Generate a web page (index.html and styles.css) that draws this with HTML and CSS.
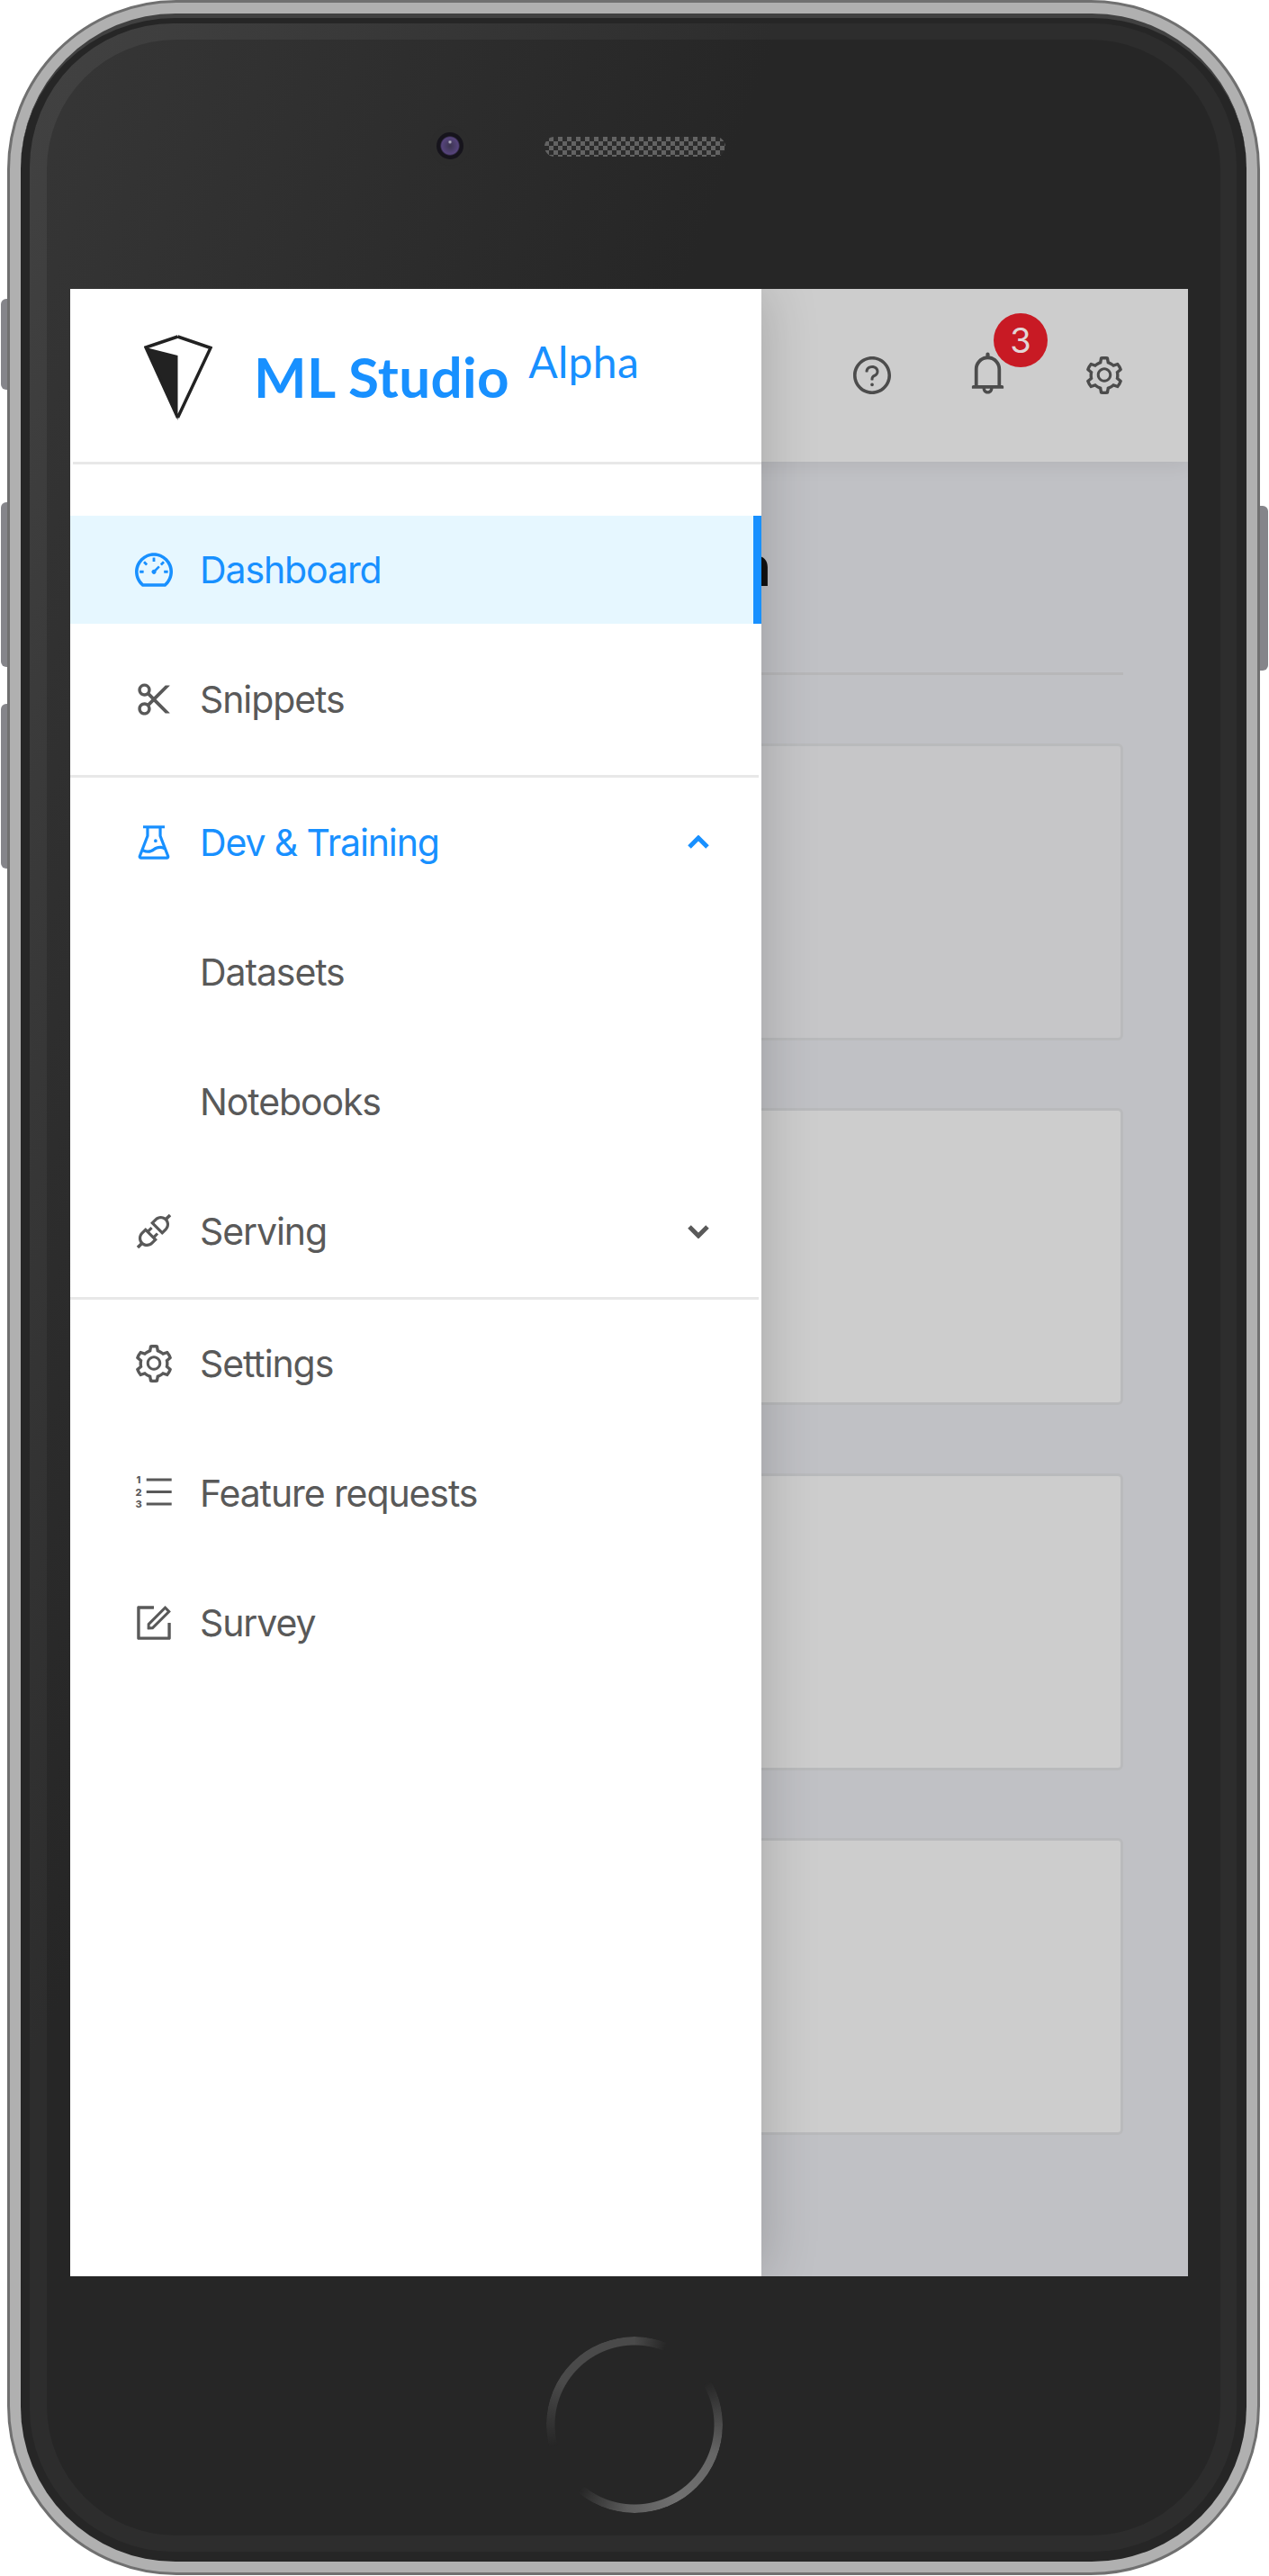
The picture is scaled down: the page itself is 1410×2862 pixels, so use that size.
FILE: index.html
```html
<!DOCTYPE html>
<html lang="en">
<head>
    <meta charset="UTF-8">
    <meta name="viewport" content="width=device-width, initial-scale=1.0">
    <title>ML Studio</title>
    <link rel="stylesheet" href="styles.css">
</head>
<body>
    <div class="device">
        <div class="rail rail-left">
            <span class="side-btn side-btn-short"></span>
            <span class="side-btn side-btn-long"></span>
            <span class="side-btn side-btn-long"></span>
        </div>

        <div class="case">
            <div class="bezel">
                <div class="band">
                    <div class="face">
                        <div class="ear">
                            <div class="camera"><span class="lens"></span></div>
                            <div class="speaker"></div>
                        </div>

                        <div class="screen">
                            <div class="app">
                                <header class="topbar">
                                    <div class="top-slot">
                                        <svg class="icon" viewBox="64 64 896 896"><path d="M512 64C264.6 64 64 264.6 64 512s200.6 448 448 448 448-200.6 448-448S759.4 64 512 64zm0 820c-205.4 0-372-166.6-372-372s166.6-372 372-372 372 166.6 372 372-166.6 372-372 372z"/><path d="M623.6 316.7C593.6 290.4 554 276 512 276s-81.6 14.5-111.6 40.7C369.2 344 352 380.7 352 420v7.6c0 4.4 3.6 8 8 8h48c4.4 0 8-3.6 8-8V420c0-44.1 43.1-80 96-80s96 35.9 96 80c0 31.1-22 59.6-56.1 72.7-21.2 8.1-39.2 22.3-52.1 40.9-13.1 19-19.9 41.8-19.9 64.9V620c0 4.4 3.6 8 8 8h48c4.4 0 8-3.6 8-8v-22.7a48.3 48.3 0 0 1 30.9-44.8c59-22.7 97.1-74.7 97.1-132.5.1-39.3-17.1-76-48.3-103.3zM472 732a40 40 0 1 0 80 0 40 40 0 1 0-80 0z"/></svg>
                                    </div>
                                    <div class="top-slot">
                                        <svg class="icon icon-bell" viewBox="64 64 896 896"><path d="M816 768h-24V428c0-141.1-104.3-257.7-240-277.1V112c0-22.1-17.9-40-40-40s-40 17.9-40 40v38.9c-135.7 19.4-240 136-240 277.1v340h-24c-17.7 0-32 14.3-32 32v32c0 4.4 3.6 8 8 8h216c0 61.8 50.2 112 112 112s112-50.2 112-112h216c4.4 0 8-3.6 8-8v-32c0-17.7-14.3-32-32-32zM512 888c-26.5 0-48-21.5-48-48h96c0 26.5-21.5 48-48 48zM304 768V428c0-55.6 21.6-107.8 60.9-147.1S456.4 220 512 220c55.6 0 107.8 21.6 147.1 60.9S720 372.4 720 428v340H304z"/></svg>
                                        <span class="badge">3</span>
                                    </div>
                                    <div class="top-slot">
                                        <svg class="icon" viewBox="64 64 896 896"><use href="#gear"/></svg>
                                    </div>
                                </header>

                                <main class="main">
                                    <h1 class="page-title">n</h1>
                                    <div class="cards">
                                        <div class="card card-first"></div>
                                        <div class="card"></div>
                                        <div class="card"></div>
                                        <div class="card"></div>
                                    </div>
                                </main>
                            </div>

                            <aside class="drawer">
                                <div class="brand">
                                    <svg class="logo" viewBox="0 0 76 96">
                                        <path class="logo-fill" d="M2 14 L37.5 23 L37.5 95 Z"/>
                                        <path class="logo-line" d="M37.5 2 L74 14.500 L37.500 92 M37.500 92 L2 14 L37.500 2"/>
                                    </svg>
                                    <div class="brand-name">ML Studio <span class="brand-tag">Alpha</span></div>
                                </div>
                                <div class="divider divider-brand"></div>

                                <nav class="menu-section menu-first">
                                    <a class="menu-item active">
                                        <svg class="icon" viewBox="64 64 896 896"><path d="M924.8 385.6a446.7 446.7 0 0 0-96-142.4 446.7 446.7 0 0 0-142.4-96C631.1 123.8 572.5 112 512 112s-119.1 11.800-174.4 35.200a446.7 446.7 0 0 0-142.4 96 446.7 446.7 0 0 0-96 142.4C75.800 440.9 64 499.5 64 560c0 132.7 58.300 257.7 159.9 343.1l1.700 1.400c5.800 4.800 13.100 7.500 20.600 7.500h531.7c7.500 0 14.800-2.700 20.600-7.500l1.700-1.400C901.7 817.7 960 692.7 960 560c0-60.500-11.900-119.1-35.200-174.4zM761.4 836H262.6A371.12 371.12 0 0 1 140 560c0-99.400 38.700-192.8 109-263 70.300-70.300 163.7-109 263-109 99.400 0 192.8 38.700 263 109 70.300 70.300 109 163.7 109 263 0 105.6-44.500 205.5-122.6 276zM623.5 421.5a8.030 8.030 0 0 0-11.300 0L527.7 506c-18.700-5-39.400-.2-54.100 14.500a55.950 55.950 0 0 0 0 79.200 55.950 55.950 0 0 0 79.200 0 55.870 55.870 0 0 0 14.500-54.100l84.500-84.500c3.100-3.100 3.100-8.200 0-11.300l-28.300-28.300zM490 320h44c4.400 0 8-3.600 8-8v-80c0-4.400-3.600-8-8-8h-44c-4.400 0-8 3.600-8 8v80c0 4.400 3.600 8 8 8zm260 218v44c0 4.400 3.600 8 8 8h80c4.400 0 8-3.600 8-8v-44c0-4.400-3.600-8-8-8h-80c-4.400 0-8 3.600-8 8zm12.700-197.200l-31.100-31.100a8.030 8.030 0 0 0-11.300 0l-56.600 56.600a8.030 8.030 0 0 0 0 11.300l31.100 31.100c3.100 3.100 8.200 3.100 11.300 0l56.600-56.600c3.100-3.100 3.100-8.200 0-11.300zm-458.600-31.100a8.030 8.030 0 0 0-11.300 0l-31.100 31.100a8.030 8.030 0 0 0 0 11.300l56.600 56.600c3.100 3.100 8.200 3.100 11.300 0l31.100-31.100c3.100-3.100 3.100-8.200 0-11.300l-56.600-56.600zM262 530h-80c-4.400 0-8 3.600-8 8v44c0 4.400 3.600 8 8 8h80c4.400 0 8-3.600 8-8v-44c0-4.400-3.600-8-8-8z"/></svg>
                                        <span>Dashboard</span>
                                    </a>
                                    <a class="menu-item">
                                        <svg class="icon" viewBox="64 64 896 896"><path d="M567.1 512l318.5-319.3c5-5 1.500-13.700-5.600-13.700h-90.500c-2.100 0-4.200.8-5.600 2.300l-273.3 274-90.200-90.500c12.500-22.100 19.700-47.600 19.700-74.800 0-83.900-68.100-152-152-152s-152 68.100-152 152 68.100 152 152 152c27.700 0 53.600-7.400 75.900-20.300l90 90.300-90.100 90.300A151.040 151.040 0 0 0 288 582c-83.900 0-152 68.100-152 152s68.100 152 152 152 152-68.100 152-152c0-27.200-7.200-52.700-19.700-74.800l90.200-90.500 273.3 274c1.500 1.500 3.500 2.300 5.600 2.300H880c7.100 0 10.700-8.600 5.600-13.700L567.1 512zM288 370c-44.100 0-80-35.900-80-80s35.900-80 80-80 80 35.900 80 80-35.900 80-80 80zm0 444c-44.100 0-80-35.900-80-80s35.900-80 80-80 80 35.900 80 80-35.900 80-80 80z"/></svg>
                                        <span>Snippets</span>
                                    </a>
                                </nav>
                                <div class="divider"></div>

                                <nav class="menu-section menu-second">
                                    <a class="menu-item open">
                                        <svg class="icon" viewBox="64 64 896 896"><path d="M512 472a40 40 0 1 0 80 0 40 40 0 1 0-80 0zm367 352.900L696.300 352V178H768v-68H256v68h71.700v174L145 824.900c-2.800 7.400-4.300 15.200-4.300 23.100 0 35.300 28.700 64 64 64h614.600c7.900 0 15.700-1.500 23.100-4.300 33-12.700 49.400-49.800 36.600-82.800zM395.700 364.700V180h232.600v184.700L719.200 600c-20.700-5.300-42.100-8-63.900-8-61.200 0-119.200 21.500-165.300 60a188.780 188.780 0 0 1-121.300 43.900c-32.700 0-64.100-8.300-91.800-23.700l118.800-307.500zM210.500 844l41.700-107.800c35.700 18.100 75.400 27.800 116.600 27.800 61.200 0 119.200-21.500 165.300-60 33.900-28.200 76.300-43.900 121.300-43.900 35 0 68.400 9.500 97.600 27.100L813.500 844h-603z"/></svg>
                                        <span>Dev &amp; Training</span>
                                        <svg class="chevron" viewBox="0 0 26 16"><path d="M3 13 L13 3 L23 13"/></svg>
                                    </a>
                                    <a class="menu-item sub-item"><span>Datasets</span></a>
                                    <a class="menu-item sub-item"><span>Notebooks</span></a>
                                    <a class="menu-item">
                                        <svg class="icon" viewBox="64 64 896 896"><path d="M917.7 148.800l-42.400-42.400c-1.600-1.600-3.600-2.300-5.700-2.300s-4.100.8-5.700 2.300l-76.100 76.100a199.270 199.270 0 0 0-112.100-34.300c-51.200 0-102.400 19.500-141.500 58.600L432.300 308.700a8.030 8.030 0 0 0 0 11.300L704 591.700c1.600 1.600 3.600 2.300 5.700 2.300 2 0 4.100-.8 5.700-2.300l101.900-101.900c68.900-69 77-175.700 24.300-253.500l76.100-76.100c3.100-3.200 3.100-8.300 0-11.400zM769.100 441.700l-59.400 59.400-186.800-186.800 59.400-59.400c24.900-24.900 58.100-38.700 93.400-38.700 35.300 0 68.400 13.700 93.400 38.700 24.900 24.900 38.700 58.100 38.700 93.400 0 35.300-13.800 68.400-38.700 93.400zm-190.200 105a8.030 8.030 0 0 0-11.300 0L501 613.300 410.700 523l66.700-66.700c3.100-3.100 3.100-8.200 0-11.300L441 408.600a8.030 8.030 0 0 0-11.300 0L363 475.300l-43-43a7.850 7.850 0 0 0-5.700-2.300c-2 0-4.100.8-5.700 2.300L206.800 534.200c-68.900 69-77 175.700-24.300 253.500l-76.100 76.100a8.030 8.030 0 0 0 0 11.300l42.400 42.400c1.600 1.600 3.600 2.300 5.700 2.300s4.100-.8 5.700-2.300l76.100-76.100c33.700 22.900 72.900 34.300 112.100 34.300 51.200 0 102.400-19.500 141.500-58.600l101.900-101.900c3.100-3.100 3.100-8.200 0-11.300l-43-43 66.700-66.700c3.100-3.100 3.100-8.200 0-11.300l-36.600-36.200zM441.700 769.100a131.320 131.320 0 0 1-93.400 38.700c-35.300 0-68.400-13.700-93.400-38.700a131.320 131.320 0 0 1-38.700-93.400c0-35.300 13.700-68.400 38.700-93.400l59.400-59.400 186.800 186.800-59.400 59.400z"/></svg>
                                        <span>Serving</span>
                                        <svg class="chevron" viewBox="0 0 26 16"><path d="M3 3 L13 13 L23 3"/></svg>
                                    </a>
                                </nav>
                                <div class="divider"></div>

                                <nav class="menu-section menu-third">
                                    <a class="menu-item">
                                        <svg class="icon" viewBox="64 64 896 896">
                                            <path id="gear" d="M924.8 625.7l-65.500-56c3.100-19 4.700-38.400 4.700-57.800s-1.600-38.800-4.700-57.800l65.500-56a32.030 32.030 0 0 0 9.300-35.200l-.9-2.600a443.740 443.740 0 0 0-79.700-137.900l-1.800-2.100a32.120 32.120 0 0 0-35.100-9.500l-81.300 28.900c-30-24.600-63.500-44-99.700-57.600l-15.700-85a32.050 32.050 0 0 0-25.800-25.700l-2.700-.5c-52.100-9.400-106.900-9.400-159 0l-2.700.5a32.050 32.050 0 0 0-25.800 25.700l-15.800 85.400a351.860 351.860 0 0 0-99 57.400l-81.900-29.100a32 32 0 0 0-35.100 9.500l-1.800 2.100a446.020 446.020 0 0 0-79.700 137.900l-.9 2.600c-4.500 12.500-.8 26.500 9.300 35.200l66.300 56.600c-3.100 18.800-4.600 38-4.600 57.100 0 19.200 1.500 38.400 4.600 57.100L99 625.500a32.030 32.030 0 0 0-9.300 35.200l.9 2.600c18.100 50.400 44.900 96.900 79.700 137.900l1.800 2.100a32.120 32.120 0 0 0 35.100 9.500l81.900-29.100c29.800 24.500 63.100 43.900 99 57.400l15.800 85.400a32.050 32.050 0 0 0 25.800 25.700l2.700.5a449.400 449.400 0 0 0 159 0l2.700-.5a32.050 32.050 0 0 0 25.800-25.700l15.700-85a350 350 0 0 0 99.700-57.600l81.300 28.900a32 32 0 0 0 35.100-9.500l1.800-2.100c34.800-41.100 61.600-87.500 79.700-137.900l.9-2.600c4.500-12.300.8-26.300-9.300-35zM788.300 465.900c2.500 15.100 3.800 30.600 3.800 46.100s-1.300 31-3.800 46.100l-6.600 40.100 74.700 63.900a370.030 370.030 0 0 1-42.600 73.600L721 702.800l-31.400 25.800c-23.900 19.600-50.500 35-79.300 45.800l-38.100 14.300-17.900 97a377.500 377.500 0 0 1-85 0l-17.900-97.200-37.800-14.500c-28.500-10.800-55-26.200-78.700-45.700l-31.400-25.900-93.400 33.200c-17-22.900-31.200-47.600-42.600-73.600l75.500-64.500-6.500-40c-2.400-14.900-3.700-30.300-3.700-45.500 0-15.300 1.200-30.600 3.700-45.500l6.500-40-75.500-64.500c11.300-26.100 25.600-50.700 42.600-73.600l93.400 33.200 31.400-25.900c23.700-19.500 50.200-34.900 78.700-45.700l37.900-14.300 17.900-97.200c28.100-3.200 56.800-3.200 85 0l17.900 97 38.100 14.300c28.700 10.800 55.400 26.200 79.300 45.800l31.400 25.800 92.800-32.900c17 22.900 31.200 47.600 42.600 73.600L781.800 426l6.500 39.900zM512 326c-97.200 0-176 78.800-176 176s78.800 176 176 176 176-78.800 176-176-78.800-176-176-176zm79.200 255.200A111.600 111.600 0 0 1 512 614c-29.900 0-58-11.700-79.200-32.800A111.600 111.600 0 0 1 400 502c0-29.900 11.700-58 32.800-79.200C454 401.600 482.100 390 512 390c29.900 0 58 11.600 79.200 32.800A111.600 111.600 0 0 1 624 502c0 29.900-11.700 58-32.800 79.200z"/>
                                        </svg>
                                        <span>Settings</span>
                                    </a>
                                    <a class="menu-item">
                                        <svg class="icon" viewBox="0 0 42 42">
                                            <text class="list-num" x="4" y="10">1</text>
                                            <text class="list-num" x="4" y="23.500">2</text>
                                            <text class="list-num" x="4" y="37">3</text>
                                            <rect x="12.700" y="4.500" width="28" height="3"/>
                                            <rect x="12.700" y="18" width="28" height="3"/>
                                            <rect x="12.700" y="31.500" width="28" height="3"/>
                                        </svg>
                                        <span>Feature requests</span>
                                    </a>
                                    <a class="menu-item">
                                        <svg class="icon" viewBox="64 64 896 896"><path d="M904 512h-56c-4.400 0-8 3.600-8 8v320H184V184h320c4.400 0 8-3.600 8-8v-56c0-4.400-3.600-8-8-8H144c-17.700 0-32 14.300-32 32v736c0 17.700 14.300 32 32 32h736c17.700 0 32-14.300 32-32V520c0-4.400-3.600-8-8-8z"/><path d="M355.900 534.900L354 653.800c-.1 8.900 7.100 16.200 16 16.200h.4l118-2.900c2-.1 4-.9 5.400-2.300l415.900-415c3.100-3.100 3.100-8.200 0-11.300L785.400 114.300c-1.600-1.600-3.600-2.300-5.700-2.300s-4.100.7-5.700 2.300l-415.800 415a8.300 8.300 0 0 0-2.300 5.600zm63.500 23.600L779.700 199l45.200 45.100-360.500 359.700-45.700 1.100.7-46.400z"/></svg>
                                        <span>Survey</span>
                                    </a>
                                </nav>
                            </aside>
                        </div>

                        <div class="chin">
                            <div class="home-ring"></div>
                        </div>
                    </div>
                </div>
            </div>
        </div>

        <div class="rail rail-right">
            <span class="side-btn side-btn-long"></span>
        </div>
    </div>
</body>
</html>
```

FILE: styles.css
```css
* {
    box-sizing: border-box;
}
body {
    margin: 0;
    background: white;
    font-family: "Inter", "Liberation Sans", sans-serif;
    color: #595959;
}

/* phone body */
.device {
    display: flex;
    width: 1410px;
    height: 2862px;
}
.rail {
    display: flex;
    flex-direction: column;
}
.rail-left {
    width: 8px;
    padding: 332px 0 0 1px;
    gap: 41px;
}
.rail-right {
    width: 10px;
    padding: 562px 1px 0 0;
}
.side-btn {
    display: block;
    background: #85858a;
}
.rail-left .side-btn {
    border-radius: 6px 0 0 6px;
}
.rail-right .side-btn {
    border-radius: 0 6px 6px 0;
}
.side-btn-short {
    height: 101px;
    margin-bottom: 84px;
}
.side-btn-long {
    height: 183px;
}
.case {
    width: 1392px;
    height: 2861px;
    padding: 12px;
    background: #b0b0b0;
    border: 3px solid #707070;
    border-radius: 188px;
}
.bezel {
    height: 100%;
    padding: 6px 11px 11px 10px;
    background: #262626;
    border-top: 5px solid #414141;
    border-radius: 172px;
}
.band {
    height: 100%;
    padding: 18px 18px 18px 19px;
    background: linear-gradient(110deg, #424242 0%, #2d2d2d 35%);
    border-radius: 160px;
}
.face {
    display: flex;
    flex-direction: column;
    height: 100%;
    padding: 0 36px 0 26px;
    background: linear-gradient(110deg, #363636 0%, #262626 35%);
    border-radius: 144px;
}

/* camera and speaker */
.ear {
    display: flex;
    align-items: flex-start;
    height: 277px;
    padding: 96px 0 0 400px;
    flex-shrink: 0;
}
.camera {
    display: flex;
    align-items: center;
    justify-content: center;
    width: 44px;
    height: 44px;
    background: #2c2c2c;
    border-radius: 50%;
}
.lens {
    width: 30px;
    height: 30px;
    background:
        radial-gradient(circle closest-side at 50% 36%, #d8d8e0 0, rgba(216, 216, 224, 0) 22%),
        radial-gradient(circle closest-side, #3c3550 0, #56447c 62%, #16141c 74%);
    border-radius: 50%;
}
.speaker {
    width: 201px;
    height: 22px;
    margin: 12px 0 0 83px;
    background: repeating-conic-gradient(#636363 0 25%, #2b2b2b 0 50%) 0 0 / 10px 10px;
    border-radius: 11px;
}

/* screen */
.screen {
    position: relative;
    width: 1242px;
    height: 2208px;
    flex-shrink: 0;
    overflow: hidden;
}
.app {
    display: flex;
    flex-direction: column;
    height: 100%;
    background: #c0c1c5;
}
.topbar {
    position: relative;
    display: flex;
    justify-content: flex-end;
    height: 192px;
    padding-right: 29px;
    background: #cdcdcd;
    box-shadow: 0 4px 20px rgba(0, 0, 0, 0.07);
}
.top-slot {
    position: relative;
    display: flex;
    align-items: center;
    justify-content: center;
    width: 129px;
    color: #4c4c4c;
}
.icon {
    display: block;
    width: 42px;
    height: 42px;
    flex-shrink: 0;
    fill: currentColor;
}
.icon-bell {
    width: 47px;
    height: 47px;
    margin-bottom: 6px;
}
.badge {
    position: absolute;
    top: 27px;
    left: 71px;
    width: 60px;
    height: 60px;
    background: #c81a24;
    color: #e2d6d6;
    font-size: 38px;
    line-height: 60px;
    text-align: center;
    border-radius: 50%;
}
.main {
    padding-right: 72px;
}
.page-title {
    height: 237px;
    margin: 0;
    padding: 72px 391px 0 0;
    font-size: 60px;
    font-weight: 600;
    line-height: 88px;
    color: #111;
    text-align: right;
    border-bottom: 3px solid #b7b7b9;
}
.cards {
    display: flex;
    flex-direction: column;
    gap: 75.400px;
    padding-top: 76px;
}
.card {
    height: 330px;
    background: #cdcdcd;
    border: 3px solid #b9babc;
    border-radius: 6px;
}
.card-first {
    background: #c6c6c8;
}

/* drawer */
.drawer {
    position: absolute;
    top: 0;
    left: 0;
    bottom: 0;
    width: 768px;
    background: white;
    box-shadow: 0 0 60px rgba(0, 0, 0, 0.2);
}
.brand {
    display: flex;
    align-items: center;
    height: 192px;
    padding-left: 82px;
}
.logo {
    width: 76px;
    height: 96px;
    margin-top: 5px;
}
.logo-fill {
    fill: #222;
}
.logo-line {
    fill: none;
    stroke: #222;
    stroke-width: 3.500;
}
.brand-name {
    margin: 0 0 6px 46px;
    font-family: "Lato", sans-serif;
    font-size: 62px;
    font-weight: 700;
    letter-spacing: 0.3px;
    color: #1890ff;
    white-space: nowrap;
}
.brand-tag {
    margin-left: 6px;
    font-size: 48px;
    font-weight: 400;
    vertical-align: 22px;
}
.divider {
    height: 3px;
    margin-right: 3px;
    background: #e8e8e8;
}
.divider-brand {
    margin: 0 0 0 3px;
}
.menu-section {
    display: flex;
    flex-direction: column;
    gap: 24px;
}
.menu-first {
    padding: 57px 0 24px;
}
.menu-second {
    padding: 12px 0 13px;
}
.menu-third {
    padding-top: 11px;
}
.menu-item {
    display: flex;
    align-items: center;
    gap: 30px;
    height: 120px;
    padding-left: 72px;
    font-size: 41px;
    letter-spacing: -1.100px;
    color: #595959;
}
.menu-item.active {
    background: #e6f7ff;
    border-right: 9px solid #1890ff;
    color: #1890ff;
}
.menu-item.open {
    color: #1890ff;
}
.sub-item {
    padding-left: 144px;
}
.chevron {
    width: 26px;
    height: 16px;
    margin: 0 57px 0 auto;
    fill: none;
    stroke: currentColor;
    stroke-width: 5;
}
.list-num {
    font-size: 11px;
    font-weight: 800;
    letter-spacing: 0;
    text-anchor: middle;
}

/* home button */
.chin {
    display: flex;
    justify-content: center;
    padding: 67px 0 0 11px;
}
.home-ring {
    width: 196px;
    height: 196px;
    border-radius: 50%;
    background: conic-gradient(#4a4a4a 0deg, transparent 22deg, transparent 60deg, #666 110deg, #707070 150deg, #5c5c5c 185deg, transparent 220deg, transparent 255deg, #4a4a4a 300deg, #4a4a4a 360deg);
    -webkit-mask: radial-gradient(circle, transparent 88px, black 89px);
    mask: radial-gradient(circle, transparent 88px, black 89px);
}
```
